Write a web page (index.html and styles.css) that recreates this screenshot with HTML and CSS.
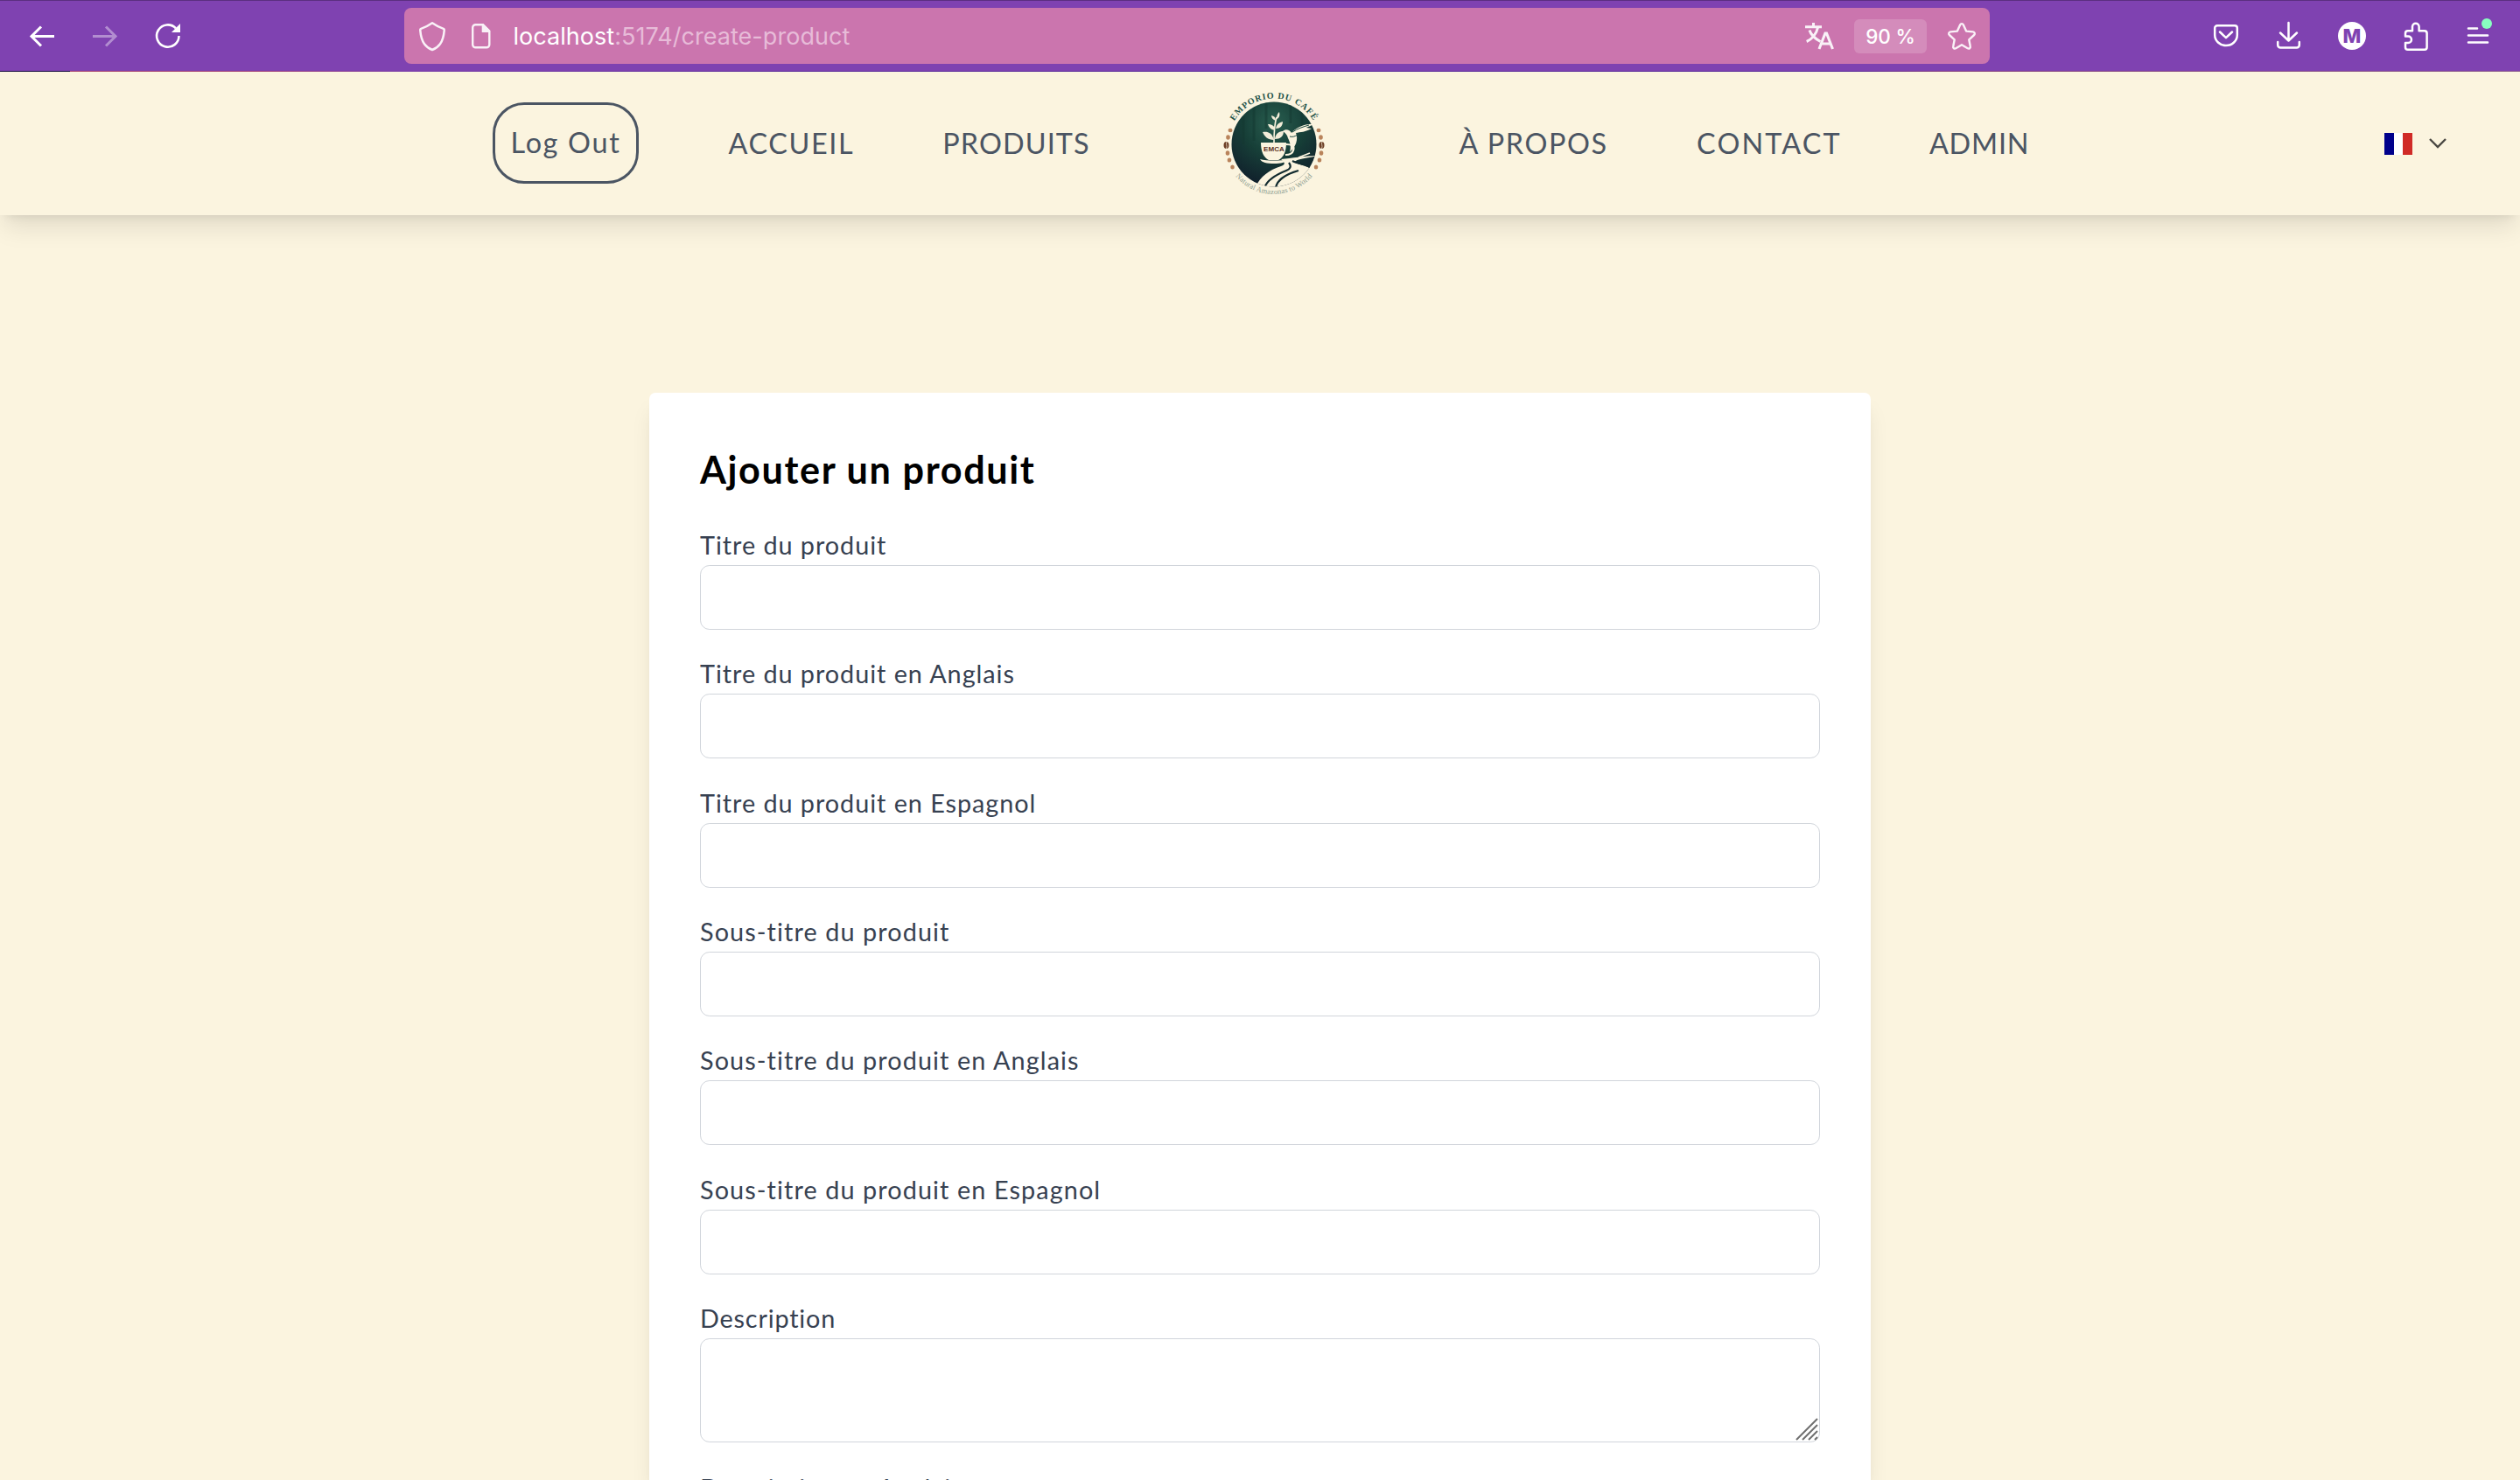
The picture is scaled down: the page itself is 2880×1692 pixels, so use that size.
FILE: index.html
```html
<!DOCTYPE html>
<html lang="fr">
<head>
<meta charset="utf-8">
<title>Ajouter un produit</title>
<link rel="stylesheet" href="styles.css">
</head>
<body>
<div class="toolbar">
  <div class="history">
    <svg class="icon" viewBox="0 0 36 36"><path d="M32 18.500H5M17 7.500L6 18.500l11 11" stroke-width="3"/></svg>
    <svg class="icon icon-off" viewBox="0 0 36 36"><path d="M4 18.500h27M19 7.500l11 11-11 11" stroke-width="3"/></svg>
    <svg class="icon" viewBox="0 0 36 36"><path d="M30.500 18A12.700 12.700 0 1 1 27 9.300" stroke-width="2.600"/><path class="solid" d="M32 4v10H22z"/></svg>
  </div>
  <div class="urlbar">
    <svg class="icon" viewBox="0 0 36 36"><path d="M18 3.300c4 2.800 8.500 5 12.300 6.300 1.200.4 1.600 1 1.400 2.200-.6 7.500-2.400 12.200-4.700 15.400-2.200 3.100-5.500 5.500-9 6.800-3.500-1.300-6.800-3.700-9-6.800-2.300-3.200-4.100-7.900-4.700-15.400-.2-1.200.2-1.800 1.400-2.200C9.500 8.300 14 6.100 18 3.300z" stroke-width="2.500" stroke-linejoin="round"/></svg>
    <svg class="icon" viewBox="0 0 36 36"><path d="M20 5.200h-8.500a3.300 3.300 0 0 0-3.300 3.300v19.500a3.300 3.300 0 0 0 3.300 3.300h12.500a3.300 3.300 0 0 0 3.300-3.300V12.500L20 5.200z" stroke-width="2.400"/><path class="solid" d="M18.700 4.500V14H28v-2L20.500 4.500z"/></svg>
    <span class="url">localhost<span class="url-rest">:5174/create-product</span></span>
    <svg class="icon translate" viewBox="0 0 36 36"><path d="M3 7.700h19M12.500 3v5M17.500 8.500C16 16 10.500 22 4.700 24.500M8 11.500c1.500 5 6 9.500 12.500 13" stroke-width="3"/><path d="M19 33l7-18h1.500l7 18M21.500 27h10.500" stroke-width="3.100"/></svg>
    <span class="zoom-level">90 %</span>
    <svg class="icon" viewBox="0 0 36 36"><path d="M16.200 5.300c.8-1.600 2.800-1.600 3.600 0l3.300 7.300 7.800.8c1.900.2 2.600 2.300 1.200 3.600l-5.800 5.400 1.500 7.700c.4 1.800-1.400 3.100-3 2.200L18 28.300l-6.800 4c-1.600.9-3.400-.4-3-2.200l1.500-7.700-5.800-5.400c-1.400-1.300-.7-3.400 1.200-3.600l7.800-.8z" stroke-width="2.400" stroke-linejoin="round"/></svg>
  </div>
  <div class="tools">
    <svg class="icon" viewBox="0 0 36 36"><path d="M8 6.200h20a2.800 2.800 0 0 1 2.800 2.800v8a12.800 12 0 0 1-25.600 0V9A2.800 2.800 0 0 1 8 6.200zM11 13.500l7 6.700 7-6.700" stroke-width="2.500" stroke-linecap="round" stroke-linejoin="round"/></svg>
    <svg class="icon" viewBox="0 0 36 36"><path d="M17.500 3v20M8 14.500l9.500 9 9.500-9M5.200 25v3.500a3 3 0 0 0 3 3h18.600a3 3 0 0 0 3-3V25" stroke-width="2.500" stroke-linecap="round" stroke-linejoin="round"/></svg>
    <span class="avatar">M</span>
    <svg class="icon" viewBox="0 0 36 36"><path d="M7 18.500V15a2.800 2.800 0 0 1 2.800-2.800h5.200V7.500a3.800 3.800 0 0 1 7.600 0v4.700h6.200a2.800 2.800 0 0 1 2.800 2.800v16a2.800 2.800 0 0 1-2.800 2.800h-19A2.800 2.800 0 0 1 7 31v-5h3.200a3.700 3.700 0 0 0 0-7.500z" stroke-width="2.500" stroke-linejoin="round"/></svg>
    <svg class="icon" viewBox="0 0 36 36"><path d="M7 9.500h10M7 17.500h22M7 25.500h22" stroke-width="2.600" stroke-linecap="round"/><circle class="update-dot" cx="28" cy="4" r="6"/></svg>
  </div>
</div>

<nav class="navbar">
  <div class="nav-group nav-left">
    <button class="logout">Log Out</button>
    <a class="link-accueil">ACCUEIL</a>
    <a class="link-produits">PRODUITS</a>
  </div>
  <svg class="logo" viewBox="0 0 130 130">
    <defs>
      <radialGradient id="forest" cx="50%" cy="25%" r="75%"><stop offset="0" stop-color="#2a5f50"/><stop offset=".5" stop-color="#173f38"/><stop offset="1" stop-color="#101f2b"/></radialGradient>
      <clipPath id="disc"><circle cx="65" cy="64" r="48.500"/></clipPath>
      <path id="arc-top" d="M12.500 64a52.500 52.500 0 0 1 105 0"/>
      <path id="arc-bottom" d="M8 64a57 57 0 0 0 114 0"/>
    </defs>
    <circle cx="65" cy="64" r="48.500" fill="url(#forest)"/>
    <g clip-path="url(#disc)">
      <path d="M42 18v42M56 16v30M84 16v24M97 24v26M30 32v32" stroke="#123730" stroke-width="3" opacity=".45"/>
      <path d="M42 118C47 102 58 94 73 89c6-2 4-5 0-8 12-1 28-4 42-4-12 3-25 4-26 7s13 3 19 9c4 5-11 6-18 14-3 4-3 8-3 12z" fill="#fbf4df"/>
      <path d="M54 114c3-10 15-16 25-20 5-2 6-5 3-9M67 114c1-9 12-16 26-20M86 83c6 3 17 4 22 8" stroke="#132c30" stroke-width="2.200" fill="none"/>
      <path d="M106 74l-13 5" stroke="#fbf4df" stroke-width="1.600" fill="none"/>
    </g>
    <path d="M50 62h29c0 10-3 17-9 20h-11c-6-3-9-10-9-20z" fill="#fbf4df"/>
    <path d="M49 81c8 2 24 2 32 0-3 4-8 5-16 5s-14-1-16-5z" fill="#fbf4df"/>
    <path d="M79 64c6 0 10 2 8 7-1 4-5 5-9 5" fill="none" stroke="#fbf4df" stroke-width="2.200"/>
    <path d="M75 49c3-3 8-2 10 2 5-6 16-11 26-10-5 2-7 3-9 4l6 1c-7 4-13 4-18 5 3 7 0 16-7 22 2-7 0-12-2-16-1-4-3-6-6-8z" fill="#fbf4df"/>
    <path d="M83 55c3 1 6 0 9-2M86 50c6-4 12-6 19-8" stroke="#1d4a41" stroke-width="1" fill="none"/>
    <path d="M65 62c0-10 0-20 3-29" stroke="#fbf4df" stroke-width="1.600" fill="none"/>
    <path d="M65 59c-2-8-7-10-13-9 2 5 6 9 13 9zM66 58c1-7 5-9 10-9 0 6-4 9-10 9zM66 48c-5-1-7-4-8-7 5 0 8 2 8 7zM67 46c1-5 4-7 8-8 0 5-3 8-8 8zM67 37c-3-1-5-3-5-6 4 1 5 3 5 6zM68 35c0-4 1-6 3-8 1 4 0 7-3 8z" fill="#f3edd9"/>
    <text x="65" y="72" class="logo-name">EMCA</text>
    <text class="logo-top"><textPath href="#arc-top" startOffset="50%">EMPORIO DU CAFÉ</textPath></text>
    <text class="logo-bottom"><textPath href="#arc-bottom" startOffset="50%">Natural Amazonas to World</textPath></text>
    <g fill="#b9835b">
      <ellipse cx="15" cy="48" rx="2.500" ry="2.200"/><ellipse cx="12.500" cy="56" rx="2.300" ry="2.700"/><ellipse cx="12" cy="74" rx="2.300" ry="2.700"/><ellipse cx="14" cy="82" rx="2.300" ry="2.600"/><ellipse cx="17.500" cy="90" rx="2.300" ry="2.500"/>
      <ellipse cx="116" cy="48" rx="2.500" ry="2.200"/><ellipse cx="118.500" cy="56" rx="2.300" ry="2.700"/><ellipse cx="119" cy="74" rx="2.300" ry="2.700"/><ellipse cx="117" cy="82" rx="2.300" ry="2.600"/><ellipse cx="113" cy="90" rx="2.300" ry="2.500"/>
    </g>
    <g fill="#6d3f26"><ellipse cx="10.500" cy="65" rx="3" ry="4"/><ellipse cx="119.500" cy="65" rx="3" ry="4"/></g>
    <path d="M11 61c-1.500 3 1 4-.5 8M120 61c-1.500 3 1 4-.5 8" stroke="#fbf4df" stroke-width=".7" fill="none"/>
  </svg>
  <div class="nav-group nav-right">
    <a class="link-propos">À PROPOS</a>
    <a class="link-contact">CONTACT</a>
    <a class="link-admin">ADMIN</a>
  </div>
  <div class="language">
    <span class="flag"></span>
    <svg class="chevron" viewBox="0 0 20 12"><path d="M1 1l9 9 9-9"/></svg>
  </div>
</nav>

<main class="page">
  <form class="card">
    <h2>Ajouter un produit</h2>
    <div class="field"><label>Titre du produit</label><input type="text"></div>
    <div class="field"><label>Titre du produit en Anglais</label><input type="text"></div>
    <div class="field"><label>Titre du produit en Espagnol</label><input type="text"></div>
    <div class="field subtitle"><label>Sous-titre du produit</label><input type="text"></div>
    <div class="field subtitle"><label>Sous-titre du produit en Anglais</label><input type="text"></div>
    <div class="field subtitle"><label>Sous-titre du produit en Espagnol</label><input type="text"></div>
    <div class="field description"><label>Description</label>
      <div class="area"><textarea></textarea><svg class="grip" viewBox="0 0 26 26"><path d="M1 25L25 1M8 25L25 8M15 25L25 15M22 25l3-3"/></svg></div>
    </div>
    <div class="field description"><label>Description en Anglais</label></div>
  </form>
</main>
</body>
</html>
```
FILE: styles.css
```css
* { box-sizing: border-box; }

body {
  margin: 0;
  height: 1692px;
  overflow: hidden;
  display: flex;
  flex-direction: column;
  background: #fbf4df;
  font-family: Lato, "Open Sans", sans-serif;
}

/* Browser toolbar */
.toolbar {
  flex: none;
  height: 82px;
  display: flex;
  align-items: center;
  background:
    linear-gradient(#5b2f80, #5b2f80) top / 100% 1px no-repeat,
    linear-gradient(90deg, #14083f 0 80px, #a8426e 80px, #a03c78 300px, #7a3fa8 460px, #5a2a9a 900px, #5a2a9a 2120px, #86407f 2220px, #8a5a8c 100%) bottom / 100% 1px no-repeat,
    #7f42b1;
  color: #fff;
  font-family: Inter, sans-serif;
}
.icon {
  flex: none;
  width: 36px;
  height: 36px;
  fill: none;
  stroke: currentColor;
  overflow: visible;
}
.icon .solid { fill: currentColor; stroke: none; }
.icon-off { opacity: .4; }
.icon .update-dot { fill: #88ffc0; stroke: none; }
.history {
  width: 462px;
  padding-left: 30px;
  display: flex;
  gap: 36px;
}
.urlbar {
  width: 1812px;
  height: 64px;
  padding: 0 14px;
  display: flex;
  align-items: center;
  border-radius: 8px;
  background: #cb75ae;
}
.urlbar .icon { opacity: .9; }
.urlbar .icon + .icon { margin-left: 20px; }
.url {
  margin-left: 18.500px;
  padding-top: 2px;
  font-size: 27px;
  line-height: 36px;
  letter-spacing: .040px;
}
.url-rest { color: #e7bbd8; }
.translate { margin-left: auto; }
.zoom-level {
  width: 83px;
  height: 39px;
  margin: 0 22px 0 23px;
  border-radius: 6px;
  background: #d48cbb;
  font-size: 22.500px;
  font-weight: 500;
  line-height: 40px;
  letter-spacing: -.1px;
  text-align: center;
}
.tools {
  flex: 1;
  padding: 0 30px 0 0;
  display: flex;
  justify-content: flex-end;
  align-items: center;
  gap: 36px;
}
.avatar {
  width: 32px;
  height: 32px;
  margin: 0 2px;
  border-radius: 50%;
  background: #fff;
  color: #7f42b1;
  font-size: 22px;
  font-weight: 800;
  line-height: 32px;
  text-align: center;
}

/* Site navigation */
.navbar {
  position: relative;
  flex: none;
  height: 164px;
  padding: 0 84px 0 563px;
  display: flex;
  align-items: center;
  background: #fbf4df;
  box-shadow: 0 18px 27px -5.400px rgba(0, 0, 0, .1), 0 7.200px 10.800px -7.200px rgba(0, 0, 0, .1);
  color: #4b5563;
  font-size: 32.400px;
  line-height: 50.400px;
}
.nav-group { display: flex; align-items: center; }
.nav-left { width: 828px; }
.nav-right { margin-left: 146.500px; }
.logout {
  width: 167px;
  height: 93px;
  margin-top: -1px;
  padding: 0;
  border: 3px solid #4b5563;
  border-radius: 36px;
  background: none;
  color: inherit;
  font: inherit;
  letter-spacing: 1.680px;
}
.link-accueil { margin-left: 102.500px; letter-spacing: 1.630px; }
.link-produits { margin-left: 101px; letter-spacing: 1.090px; }
.link-propos { letter-spacing: 1.570px; }
.link-contact { margin-left: 101.500px; letter-spacing: 2.140px; }
.link-admin { margin-left: 100px; letter-spacing: .820px; }
.logo { flex: none; width: 130px; height: 130px; margin-top: 3px; }
.logo-name {
  font: 700 8px "Liberation Sans", sans-serif;
  letter-spacing: .1px;
  text-anchor: middle;
  fill: #5a2f22;
}
.logo-top {
  font: 700 10px "Liberation Serif", serif;
  letter-spacing: .9px;
  text-anchor: middle;
  fill: #1d5147;
}
.logo-bottom {
  font: 8.500px "Liberation Serif", serif;
  letter-spacing: .2px;
  text-anchor: middle;
  fill: #8d9c90;
}
.language {
  margin-left: auto;
  display: flex;
  align-items: center;
  gap: 19px;
}
.flag {
  width: 32px;
  height: 25px;
  background: linear-gradient(90deg, #00008b 0 11px, #fff 11px 21px, #d02b27 21px);
}
.chevron {
  width: 20px;
  height: 12px;
  overflow: visible;
  fill: none;
  stroke: #4a4843;
  stroke-width: 2.400;
}

/* Product form */
.page { display: flex; justify-content: center; }
.card {
  width: 1396px;
  height: 1243px;
  margin-top: 203px;
  padding: 59px 58px 0;
  border-radius: 7.200px 7.200px 0 0;
  background: #fff;
  box-shadow: 0 18px 27px -5.400px rgba(0, 0, 0, .1), 0 7.200px 10.800px -7.200px rgba(0, 0, 0, .1);
}
h2 {
  margin: 0 0 36.400px;
  color: #000;
  font-size: 43.200px;
  line-height: 57.600px;
  letter-spacing: 1.600px;
}
.field {
  margin-bottom: 29.350px;
  color: #374151;
  font-size: 28.800px;
  letter-spacing: .960px;
}
.subtitle { letter-spacing: 1.100px; }
.description { letter-spacing: .820px; }
.field label { display: block; height: 44px; line-height: 43px; }
.field input,
.field textarea {
  display: block;
  width: 100%;
  height: 74px;
  border: 1px solid #d1d5db;
  border-radius: 10.800px;
  background: #fff;
}
.area { position: relative; }
.field textarea { height: 119px; resize: none; }
.description + .description { padding-top: 2px; }
.grip {
  position: absolute;
  right: 2px;
  bottom: 2px;
  width: 26px;
  height: 26px;
  fill: none;
  stroke: #6f6f6f;
  stroke-width: 2;
}
```
